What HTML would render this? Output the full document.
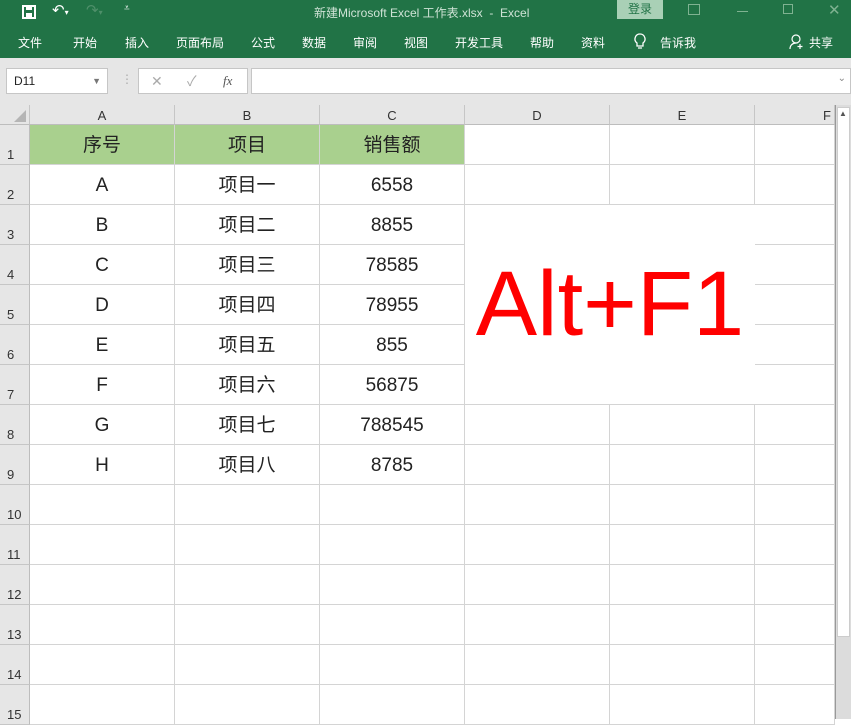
<!DOCTYPE html><html><head><meta charset="utf-8"><style>
*{margin:0;padding:0;box-sizing:border-box}
body{width:851px;height:719px;overflow:hidden;background:#fff;font-family:"Liberation Sans","Noto Sans CJK SC",sans-serif;position:relative}
.tb{position:absolute;left:0;top:0;width:851px;height:24px;background:#217346;color:#cfe3d6;font-size:12px}
.rb{position:absolute;left:0;top:24px;width:851px;height:34px;background:#217346;color:#fff;font-size:12px}
.rb span{position:absolute;top:10px}
.fa{position:absolute;left:0;top:58px;width:851px;height:47px;background:#e6e6e6}
.ch{position:absolute;top:105px;height:20px;background:#e6e6e6;border-right:1px solid #c6c6c6;border-bottom:1px solid #bdbdbd;font-size:13px;color:#333;text-align:center;line-height:22px}
.cell{position:absolute;border-right:1px solid #d4d4d4;border-bottom:1px solid #d4d4d4;text-align:center;font-size:19px;color:#222;line-height:42px}
.rh{position:absolute;left:0;width:30px;background:#e6e6e6;border-right:1px solid #bdbdbd;border-bottom:1px solid #c6c6c6;font-size:13px;color:#333;padding-left:7px;padding-top:22px}
</style></head><body>
<div class="tb">
<svg style="position:absolute;left:22px;top:5px" width="14" height="14"><rect x="1" y="1" width="12" height="12" fill="none" stroke="#fff" stroke-width="2"/><rect x="4" y="1" width="6" height="4" fill="#fff"/><rect x="4" y="8" width="6" height="5" fill="#fff"/></svg>
<span style="position:absolute;left:52px;top:1px;color:#fff;font-size:15px">↶<small style="font-size:8px">▾</small></span>
<span style="position:absolute;left:86px;top:1px;color:#4f8f6a;font-size:15px">↷<small style="font-size:8px">▾</small></span>
<span style="position:absolute;left:124px;top:3px;color:#fff;font-size:10px">⩡</span>
<span style="position:absolute;left:314px;top:4px">新建Microsoft Excel 工作表.xlsx&nbsp; -&nbsp; Excel</span>
<span style="position:absolute;left:617px;top:0;width:46px;height:19px;background:#a9d0b6;color:#217346;text-align:center;line-height:19px">登录</span>
<span style="position:absolute;left:688px;top:4px;width:12px;height:11px;border:1px solid #7fb291"></span>
<span style="position:absolute;left:737px;top:11px;width:11px;border-top:1px solid #7fb291"></span>
<span style="position:absolute;left:783px;top:4px;width:10px;height:10px;border:1px solid #7fb291"></span>
<span style="position:absolute;left:828px;top:1px;color:#7fb291;font-size:15px">✕</span>
</div>
<div class="rb">
<span style="left:18px">文件</span><span style="left:73px">开始</span><span style="left:125px">插入</span><span style="left:176px">页面布局</span><span style="left:251px">公式</span><span style="left:302px">数据</span><span style="left:353px">审阅</span><span style="left:404px">视图</span><span style="left:455px">开发工具</span><span style="left:530px">帮助</span><span style="left:581px">资料</span>
<svg style="position:absolute;left:634px;top:9px" width="12" height="17"><path d="M6 1a5 5 0 0 0-3 9v3h6v-3a5 5 0 0 0-3-9zM4 15h4" fill="none" stroke="#fff" stroke-width="1.3"/></svg>
<span style="left:660px">告诉我</span>
<svg style="position:absolute;left:789px;top:10px" width="16" height="16"><circle cx="7" cy="5" r="4" fill="none" stroke="#fff" stroke-width="1.2"/><path d="M1 15c0-4 3-6 6-6M11 10v5M8.5 12.5h5" fill="none" stroke="#fff" stroke-width="1.2"/></svg>
<span style="left:809px">共享</span>
</div>
<div class="fa">
<div style="position:absolute;left:6px;top:10px;width:102px;height:26px;background:#fff;border:1px solid #c6c6c6;font-size:12px;line-height:24px;padding-left:7px;color:#222">D11<span style="position:absolute;right:6px;color:#777;font-size:9px">▼</span></div>
<span style="position:absolute;left:121px;top:14px;color:#aaa;font-size:12px">⋮</span>
<div style="position:absolute;left:138px;top:10px;width:110px;height:26px;background:#fff;border:1px solid #c6c6c6;color:#aaa;font-size:14px;line-height:24px"><span style="position:absolute;left:12px">✕</span><span style="position:absolute;left:48px">✓</span><span style="position:absolute;left:84px;color:#555;font-style:italic;font-family:'Liberation Serif';font-size:13px">fx</span></div>
<div style="position:absolute;left:251px;top:10px;width:600px;height:26px;background:#fff;border:1px solid #c6c6c6"><span style="position:absolute;right:4px;top:4px;color:#888;font-size:10px">⌄</span></div>
</div>
<div class="ch" style="left:0;width:30px"><svg style="position:absolute;left:14px;top:5px" width="12" height="12"><path d="M12 0V12H0Z" fill="#b5b5b5"/></svg></div>
<div class="ch" style="left:30px;width:145px">A</div><div class="ch" style="left:175px;width:145px">B</div><div class="ch" style="left:320px;width:145px">C</div><div class="ch" style="left:465px;width:145px">D</div><div class="ch" style="left:610px;width:145px">E</div><div class="ch" style="left:755px;width:80px;text-align:right;padding-right:3px">F</div>
<div id="g"></div>
<div style="position:absolute;left:835px;top:105px;width:16px;height:614px;background:#dcdcdc;border-left:1px solid #999"><div style="position:absolute;left:1px;top:2px;width:13px;height:530px;background:#fff;border:1px solid #ccc"></div><span style="position:absolute;left:3px;top:4px;font-size:8px;color:#555">▲</span></div>
<script>
var rows=[["序号","项目","销售额"],["A","项目一","6558"],["B","项目二","8855"],["C","项目三","78585"],["D","项目四","78955"],["E","项目五","855"],["F","项目六","56875"],["G","项目七","788545"],["H","项目八","8785"]];
var xs=[30,175,320,465,610,755],ws=[145,145,145,145,145,80],h="";
for(var r=0;r<15;r++){var y=125+40*r;
h+='<div class="rh" style="top:'+y+'px;height:40px">'+(r+1)+'</div>';
for(var c=0;c<6;c++){var t=(rows[r]&&c<3)?rows[r][c]:"";var bg=r==0&&c<3?"background:#a9d08e;":"";
h+='<div class="cell" style="'+bg+'left:'+xs[c]+'px;top:'+y+'px;width:'+ws[c]+'px;height:40px">'+t+'</div>';}}
document.getElementById('g').innerHTML=h;
</script>
<div style="position:absolute;left:465px;top:205px;width:290px;height:199px;background:#fff;color:#ff0000;font-size:92px;line-height:199px;text-align:center;font-family:'Liberation Sans',sans-serif">Alt+F1</div>
</body></html>
